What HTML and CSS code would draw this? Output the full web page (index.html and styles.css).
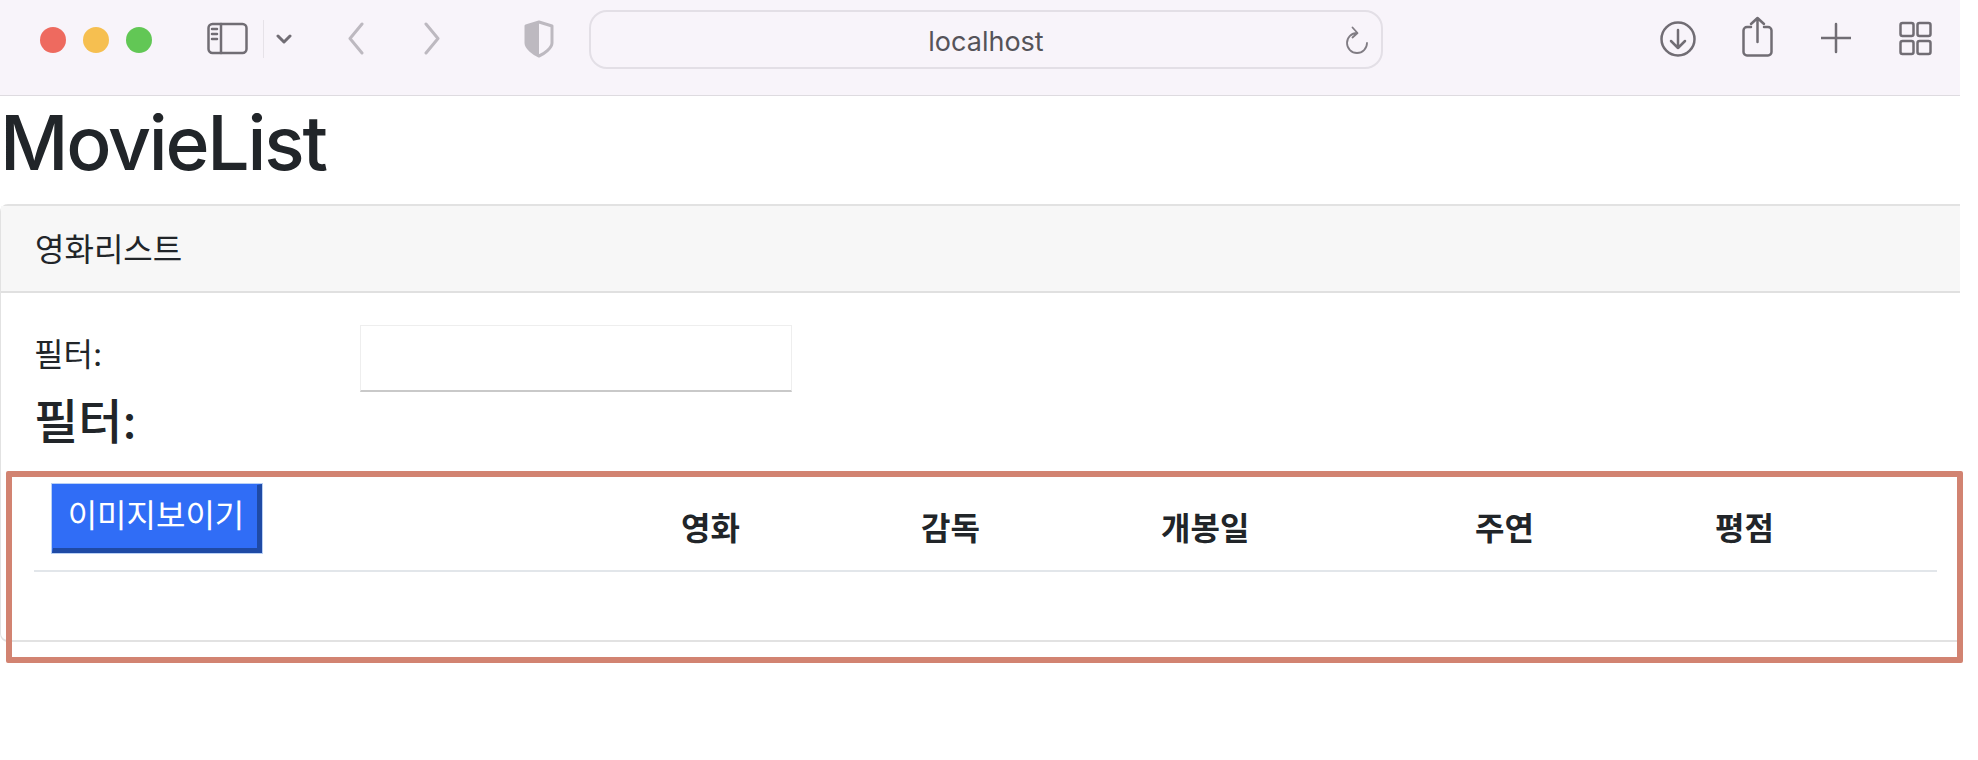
FILE: index.html
```html
<!DOCTYPE html>
<html lang="ko">
<head>
<meta charset="utf-8">
<title>MovieList</title>
<link rel="stylesheet" href="styles.css">
</head>
<body>
<div class="page">
  <header class="toolbar">
    <span class="light red"></span>
    <span class="light yellow"></span>
    <span class="light green"></span>
    <svg class="ic sidebar" width="41" height="60" viewBox="0 0 41 60"><rect x="1.5" y="14" width="38" height="29" rx="4"/><path d="M14 14V43M5 19H10M5 24H10M5 29H10"/></svg>
    <span class="divider"></span>
    <svg class="ic chev" width="16" height="60" viewBox="0 0 16 60"><path d="M2 26L8 32L14 26"/></svg>
    <svg class="ic muted back" width="17" height="60" viewBox="0 0 17 60"><path d="M15 14L3 28.500L15 43"/></svg>
    <svg class="ic muted fwd" width="17" height="60" viewBox="0 0 17 60"><path d="M2 14L14 28.500L2 43"/></svg>
    <svg class="ic muted shield" width="30" height="60" viewBox="0 0 30 60"><path class="fill" d="M15 12L2 16V33C2 38 10 44 15 46Z"/><path d="M15 12L28 16V33C28 38 20 44 15 46C10 44 2 38 2 33V16Z"/></svg>
    <div class="url">
      <span class="url-spacer"></span>
      <span class="url-text">localhost</span>
      <svg class="ic thin reload" width="24" height="28" viewBox="0 0 24 28"><path d="M12 7A10 10 0 1 0 22 17M7.500 1.500L12.500 7L7.500 11.500"/></svg>
    </div>
    <svg class="ic download" width="36" height="60" viewBox="0 0 36 60"><circle cx="18" cy="29" r="16.500"/><path d="M18 20V38M11 31L18 38L25 31"/></svg>
    <svg class="ic share" width="31" height="60" viewBox="0 0 31 60"><path d="M9 17H5A3.500 3.500 0 0 0 1.500 20.500V42A3.500 3.500 0 0 0 5 45.500H26A3.500 3.500 0 0 0 29.500 42V20.500A3.500 3.500 0 0 0 26 17H22M15.500 8V32M9 14L15.500 8L22 14"/></svg>
    <svg class="ic plus" width="30" height="60" viewBox="0 0 30 60"><path d="M0 28H30M15 14V42"/></svg>
    <svg class="ic tabs" width="33" height="60" viewBox="0 0 33 60"><rect x="1.500" y="13" width="13" height="13" rx="2"/><rect x="18.500" y="13" width="13" height="13" rx="2"/><rect x="1.500" y="31" width="13" height="13" rx="2"/><rect x="18.500" y="31" width="13" height="13" rx="2"/></svg>
  </header>

  <h1 class="title">MovieList</h1>

  <section class="card">
    <div class="card-header">영화리스트</div>
    <div class="card-body">
      <div class="filter-row">
        <label class="filter-label" for="filter">필터:</label>
        <input class="filter-input" id="filter" type="text">
      </div>
      <h4 class="filter-value">필터:</h4>
      <table class="movies">
        <colgroup>
          <col class="col-a"><col class="col-b"><col class="col-b"><col class="col-c"><col class="col-b"><col class="col-d">
        </colgroup>
        <thead>
          <tr>
            <th><button class="image-btn" type="button">이미지보이기</button></th>
            <th>영화</th>
            <th>감독</th>
            <th>개봉일</th>
            <th>주연</th>
            <th>평점</th>
          </tr>
        </thead>
        <tbody>
          <tr><td class="empty" colspan="6"></td></tr>
        </tbody>
      </table>
    </div>
  </section>

  <div class="annotation"></div>
</div>
</body>
</html>
```

FILE: styles.css
```css
* { box-sizing: border-box; }
html, body { margin: 0; padding: 0; background: #fff; }
body {
  font-family: Inter, "Noto Sans CJK KR", "Noto Sans", sans-serif;
  color: #212529;
  font-size: 32px;
}
.page { position: relative; width: 1978px; height: 760px; overflow: hidden; }

.toolbar {
  display: flex;
  align-items: flex-start;
  width: 1960px;
  height: 96px;
  padding: 10px 0 0 40px;
  background: #f8f4fa;
  border-bottom: 1px solid #dedbe0;
}
.light { width: 26px; height: 26px; margin-top: 17px; margin-right: 17px; border-radius: 50%; flex: none; }
.red { background: #ee6a5f; }
.yellow { background: #f6bf50; }
.green { background: #62c755; }
.ic { flex: none; fill: none; stroke: #716d74; stroke-width: 2.5; stroke-linecap: round; stroke-linejoin: round; }
.ic.muted { stroke: #bdb9c0; stroke-width: 3; }
.ic .fill { fill: #bdb9c0; stroke: none; }
.ic.thin { stroke-width: 1.8; stroke: #807c83; }
.sidebar { margin-left: 38px; }
.divider { width: 1px; height: 38px; margin: 10px 0 0 15px; background: #e6e2e8; flex: none; }
.chev { margin-left: 12px; stroke-width: 3; }
.back { margin-left: 55px; }
.fwd { margin-left: 60px; }
.shield { margin-left: 83px; }
.url {
  display: grid;
  grid-template-columns: 1fr auto 1fr;
  align-items: center;
  width: 794px;
  height: 59px;
  margin-left: 35px;
  padding: 0 12px;
  border: 2px solid #e3dfe6;
  border-radius: 18px;
  flex: none;
}
.url-text {
  padding-top: 4px;
  font-family: Inter, "Liberation Sans", sans-serif;
  font-size: 27px;
  line-height: 40px;
  color: #555359;
}
.reload { justify-self: end; }
.download { margin-left: 277px; }
.share { margin-left: 46px; }
.plus { margin-left: 48px; }
.tabs { margin-left: 48px; }

.title {
  margin: 0;
  height: 108px;
  font-family: Inter, "Liberation Sans", sans-serif;
  font-size: 75px;
  font-weight: 500;
  letter-spacing: -2.2px;
  line-height: 94px;
  color: #212529;
}

.card {
  width: 1960px;
  height: 438px;
  border: 2px solid #e2e2e2;
  border-right: 0;
  border-left-width: 1px;
  border-radius: 8px 0 0 8px;
}
.card-header {
  height: 87px;
  padding-left: 34px;
  background: #f7f7f7;
  border-bottom: 2px solid #e0e0e0;
  line-height: 87px;
}
.card-body { padding: 32px 23px 0 33px; }
.filter-row { display: flex; align-items: flex-start; height: 67px; }
.filter-label { width: 326px; line-height: 59px; }
.filter-input {
  width: 432px;
  height: 67px;
  padding: 0;
  background: #fff;
  border: 1px solid #eeeeee;
  border-bottom: 2px solid #c9c9c9;
  border-radius: 0;
  outline: none;
}
.filter-value {
  margin: -1px 0 20px;
  height: 56px;
  font-size: 48px;
  font-weight: 500;
  line-height: 61px;
}
.movies { table-layout: fixed; width: 1903px; border-collapse: collapse; }
.col-a { width: 630px; }
.col-b { width: 240px; }
.col-c { width: 314px; }
.col-d { width: 239px; }
.movies th {
  padding: 17px;
  font-weight: 700;
  line-height: 48px;
  text-align: left;
  vertical-align: bottom;
  border-bottom: 2px solid #e2e6ea;
}
.image-btn {
  display: block;
  width: 210px;
  height: 69px;
  margin: 0 1px;
  padding: 0 0 1px 2px;
  font-family: inherit;
  font-size: 32px;
  font-weight: 400;
  line-height: 50px;
  color: #fff;
  background: #306df6;
  border-style: solid;
  border-width: 1px 5px 5px 1px;
  border-color: #306df6 #1f4aa5 #1f4aa5 #306df6;
  box-shadow: 0 0 0 1px #b9d0f5;
}
.empty { height: 65px; padding: 0; }

.annotation {
  position: absolute;
  left: 6px;
  top: 471px;
  width: 1957px;
  height: 192px;
  border: 6px solid #d28371;
  border-radius: 2px;
  pointer-events: none;
}
```
